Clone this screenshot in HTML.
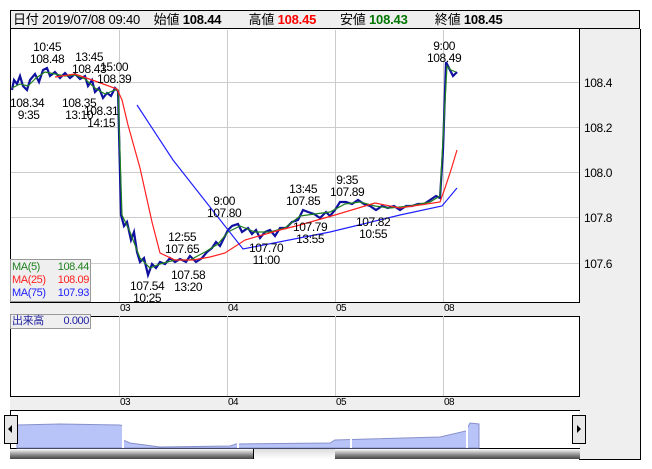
<!DOCTYPE html>
<html><head><meta charset="utf-8"><style>
body{margin:0;width:652px;height:469px;background:#fff;position:relative;overflow:hidden;font-family:"Liberation Sans","Noto Sans CJK JP",sans-serif;}
.a{position:absolute;}
.t{position:absolute;font-size:12px;line-height:12px;color:#000;text-align:center;white-space:nowrap;letter-spacing:-0.4px}
.s{position:absolute;font-size:10px;line-height:10px;color:#000;letter-spacing:-0.5px}
.lg{position:absolute;background:#efefef;border:1px solid #999;box-sizing:border-box;font-size:11px;line-height:13px;letter-spacing:-0.4px;white-space:nowrap}
.lg div{position:relative;height:13px}
.lg span{position:absolute;right:1px;top:0}
</style></head><body>
<div class="a" style="left:10px;top:10px;width:630px;height:19px;border:1px solid #000;background:#efefef;box-sizing:border-box"></div>
<div class="a" style="left:13px;top:12px;font-size:13px;line-height:16px;white-space:nowrap;letter-spacing:-0.2px">日付 2019/07/08 09:40&nbsp;&nbsp;&nbsp; 始値 <b>108.44</b>&nbsp;&nbsp;&nbsp;&nbsp;&nbsp;&nbsp;&nbsp; 高値 <b style="color:#f00">108.45</b>&nbsp;&nbsp;&nbsp;&nbsp;&nbsp;&nbsp; 安値 <b style="color:#070">108.43</b>&nbsp;&nbsp;&nbsp;&nbsp;&nbsp;&nbsp;&nbsp; 終値 <b>108.45</b></div>
<div class="a" style="left:579px;top:29px;width:61px;height:430px;background:#efefef;border-right:1px solid #000;border-bottom:1px solid #000"></div>
<div class="a" style="left:10px;top:29px;width:1px;height:430px;background:#000"></div>
<div class="a" style="left:579px;top:29px;width:1px;height:381px;background:#000"></div>
<div class="a" style="left:10px;top:302px;width:570px;height:13px;background:#efefef;border-top:1px solid #000;border-bottom:1px solid #000"></div>
<div class="a" style="left:10px;top:396px;width:570px;height:13px;background:#efefef;border-top:1px solid #000;border-bottom:1px solid #000"></div>
<div class="s" style="left:120px;top:304px">03</div><div class="s" style="left:228px;top:304px">04</div><div class="s" style="left:336px;top:304px">05</div><div class="s" style="left:444px;top:304px">08</div>
<div class="s" style="left:120px;top:398px">03</div><div class="s" style="left:228px;top:398px">04</div><div class="s" style="left:336px;top:398px">05</div><div class="s" style="left:444px;top:398px">08</div>
<div class="a" style="left:10px;top:448px;width:570px;height:11px;border-top:1px solid #000;box-sizing:border-box;background:linear-gradient(#ddd,#fff)"></div>
<div class="a" style="left:10px;top:448px;width:244px;height:11px;border-top:1px solid #000;border-right:1px solid #000;box-sizing:border-box;background:linear-gradient(#fff,#888 60%,#444)"></div>
<div class="a" style="left:335px;top:448px;width:245px;height:11px;border-top:1px solid #000;box-sizing:border-box;background:linear-gradient(#fff,#888 60%,#444)"></div>
<svg class="a" style="left:0;top:0" width="652" height="469">
<g stroke="#ccc" stroke-width="1">
<line x1="119.5" y1="30" x2="119.5" y2="302"/><line x1="227.5" y1="30" x2="227.5" y2="302"/><line x1="335.5" y1="30" x2="335.5" y2="302"/><line x1="443.5" y1="30" x2="443.5" y2="302"/>
<line x1="119.5" y1="316" x2="119.5" y2="396"/><line x1="227.5" y1="316" x2="227.5" y2="396"/><line x1="335.5" y1="316" x2="335.5" y2="396"/><line x1="443.5" y1="316" x2="443.5" y2="396"/>
<line x1="11" y1="82.5" x2="579" y2="82.5"/><line x1="11" y1="127.5" x2="579" y2="127.5"/><line x1="11" y1="172.5" x2="579" y2="172.5"/><line x1="11" y1="217.5" x2="579" y2="217.5"/><line x1="11" y1="263.5" x2="579" y2="263.5"/>
</g>
<path d="M17 425 L60 424 L120 425 L123 426 L123 440 L130 443 L160 447 L230 446 L236 444 L330 443 L335 440 L440 437 L466 431 L470 423 L479 424 L479 448 L17 448Z" fill="#b8c4f8" stroke="#8890cc" stroke-width="1"/>
<rect x="122" y="425" width="2" height="23" fill="#fff"/><rect x="237" y="425" width="2" height="23" fill="#fff"/><rect x="350" y="425" width="2" height="23" fill="#fff"/><rect x="466" y="425" width="2" height="23" fill="#fff"/>
<rect x="4.5" y="415.5" width="13" height="28" fill="#e8e8e8" stroke="#000"/><path d="M8 429 L12 425 L12 433Z" fill="#000"/>
<rect x="572.5" y="415.5" width="13" height="28" fill="#e8e8e8" stroke="#000"/><path d="M581 429 L577 425 L577 433Z" fill="#000"/>
<g fill="none">
<path stroke="#1010a0" stroke-width="2.2" d="M12 90 L14 80 L17 84 L20 76 L23 86 L27 90 L30 80 L35 74 L39 82 L43 70 L47 68 L50 76 L55 72 L60 78 L65 73 L70 78 L75 74 L80 79 L85 76 L88 86 L92 80 L95 92 L99 88 L103 98 L107 93 L111 96 L115 88 L118 91 L121 215 L124 226 L127 222 L131 240 L134 232 L137 252 L140 262 L144 258 L148 275 L152 264 L156 268 L160 262 L165 264 L170 258 L175 262 L180 259 L186 262 L190 256 L196 262 L202 258 L207 252 L212 248 L216 242 L220 246 L224 238 L228 230 L232 226 L238 224 L242 232 L248 228 L252 234 L256 230 L260 238 L265 232 L270 230 L275 236 L280 228 L286 228 L292 222 L298 220 L303 210 L308 212 L314 214 L320 218 L326 212 L330 216 L335 210 L340 202 L346 202 L352 204 L358 200 L364 204 L370 206 L376 210 L382 206 L388 208 L394 206 L400 210 L406 206 L412 206 L418 204 L424 204 L430 200 L436 196 L440 198 L443 150 L446 62 L450 70 L453 76 L457 72"/>
<path stroke="#208020" stroke-width="1.2" d="M12 88 L20 84 L28 86 L36 78 L45 72 L55 74 L65 76 L75 75 L85 79 L95 88 L105 94 L115 90 L118 90 L122 215 L130 232 L140 258 L150 268 L160 264 L175 260 L190 260 L205 252 L218 244 L228 232 L240 226 L255 232 L270 232 L285 228 L300 216 L315 214 L330 212 L345 204 L360 202 L375 206 L390 208 L410 206 L430 202 L440 196 L444 120 L447 66 L451 70 L456 72"/>
<path stroke="#ff2020" stroke-width="1.2" d="M55 77 L75 74 L95 81 L117 89 L122 100 L128 125 L140 168 L152 222 L160 253 L175 260 L193 260 L210 257 L225 253 L245 240 L280 230 L300 225 L335 215 L375 203 L400 208 L440 202 L445 188 L451 170 L457 150"/>
<path stroke="#2020ff" stroke-width="1.2" d="M137 105 L173 160 L243 249 L330 232 L400 215 L442 206 L457 188"/>
</g>
</svg>
<div class="t" style="left:584px;top:77px">108.4</div>
<div class="t" style="left:584px;top:122px">108.2</div>
<div class="t" style="left:584px;top:167px">108.0</div>
<div class="t" style="left:584px;top:212px">107.8</div>
<div class="t" style="left:584px;top:258px">107.6</div>
<div class="t" style="left:30px;top:41px">10:45<br>108.48</div>
<div class="t" style="left:72px;top:51px">13:45<br>108.43</div>
<div class="t" style="left:97px;top:61px">15:00<br>108.39</div>
<div class="t" style="left:10px;top:97px">108.34<br>&nbsp;9:35</div>
<div class="t" style="left:62px;top:97px">108.35<br>13:10</div>
<div class="t" style="left:84px;top:105px">108.31<br>14:15</div>
<div class="t" style="left:427px;top:40px">9:00<br>108.49</div>
<div class="t" style="left:207px;top:195px">9:00<br>107.80</div>
<div class="t" style="left:165px;top:231px">12:55<br>107.65</div>
<div class="t" style="left:130px;top:280px">107.54<br>10:25</div>
<div class="t" style="left:171px;top:269px">107.58<br>13:20</div>
<div class="t" style="left:249px;top:242px">107.70<br>11:00</div>
<div class="t" style="left:286px;top:183px">13:45<br>107.85</div>
<div class="t" style="left:293px;top:221px">107.79<br>13:55</div>
<div class="t" style="left:330px;top:174px">9:35<br>107.89</div>
<div class="t" style="left:356px;top:216px">107.82<br>10:55</div>
<div class="lg" style="left:10px;top:259px;width:81px;height:43px;padding-left:1px;padding-top:1px">
<div style="color:#208020">MA(5)<span>108.44</span></div>
<div style="color:#ff2020">MA(25)<span>108.09</span></div>
<div style="color:#2020ff">MA(75)<span>107.93</span></div>
</div>
<div class="lg" style="left:10px;top:314px;width:81px;height:15px;color:#2020a0;padding-left:1px"><div>出来高<span>0.000</span></div></div>
</body></html>
